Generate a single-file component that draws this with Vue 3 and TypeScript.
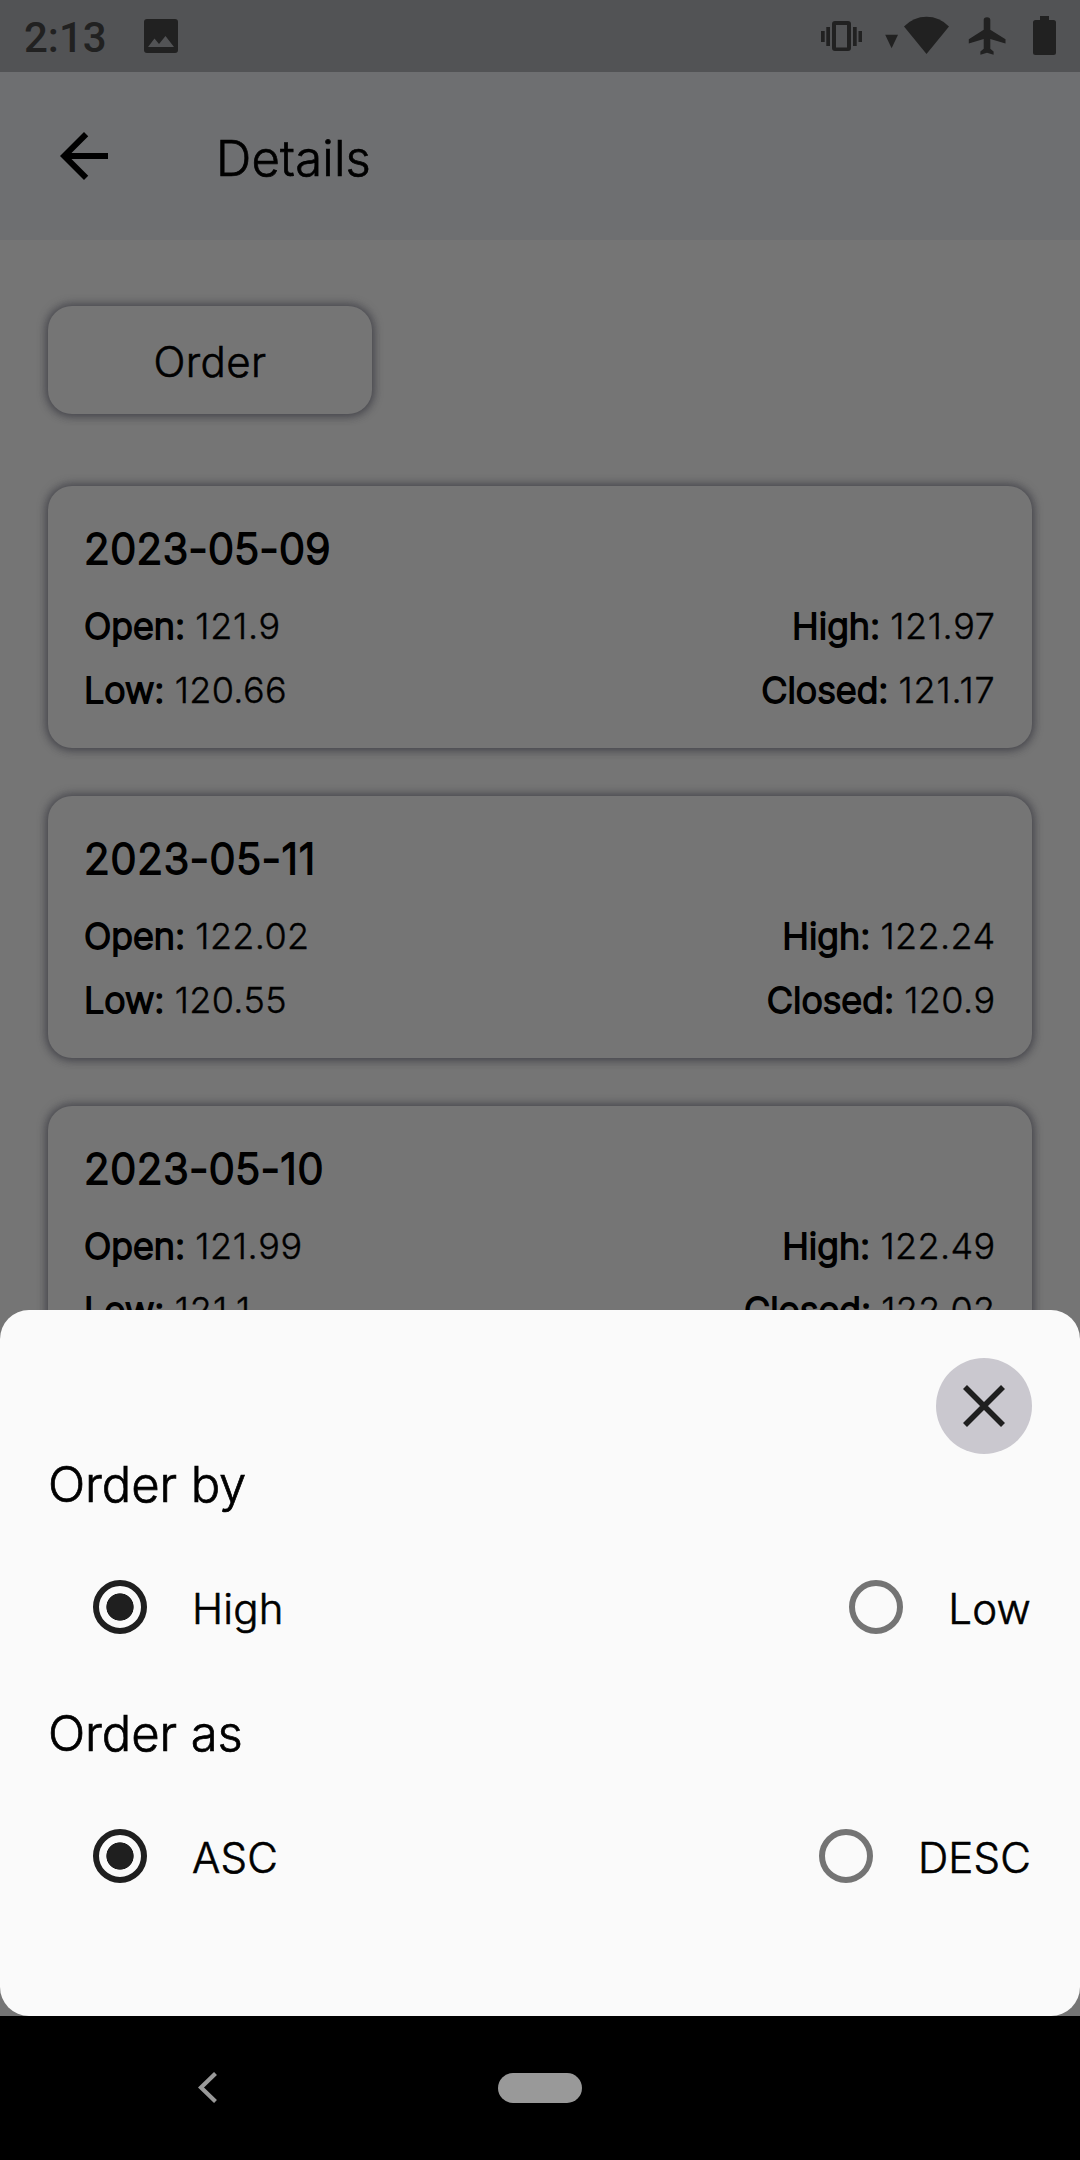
<script setup lang="ts">
interface Quote {
  date: string
  open: string
  low: string
  high: string
  closed: string
}

interface OrderGroup {
  title: string
  options: { label: string; selected: boolean }[]
}

const quotes: Quote[] = [
  { date: '2023-05-09', open: '121.9', low: '120.66', high: '121.97', closed: '121.17' },
  { date: '2023-05-11', open: '122.02', low: '120.55', high: '122.24', closed: '120.9' },
  { date: '2023-05-10', open: '121.99', low: '121.1', high: '122.49', closed: '122.02' },
]

const groups: OrderGroup[] = [
  { title: 'Order by', options: [{ label: 'High', selected: true }, { label: 'Low', selected: false }] },
  { title: 'Order as', options: [{ label: 'ASC', selected: true }, { label: 'DESC', selected: false }] },
]

// The digit 1 is narrow, so numbers that contain it are tracked a little wider.
function tracking(text: string, base: number, perOne: number) {
  const ones = text.split('1').length - 1
  return { letterSpacing: `${(base + (perOne * ones) / text.length).toFixed(2)}px` }
}
</script>

<template>
  <div class="screen">
    <header class="status">
      <span class="clock">2:13</span>
      <svg class="photo" width="36" height="36" viewBox="0 0 36 36">
        <path fill-rule="evenodd" d="M4 1h28q3 0 3 3v28q0 3-3 3H4q-3 0-3-3V4q0-3 3-3ZM5 29h26l-8.500-11-6.500 8-4.500-5.500Z" />
      </svg>
      <svg class="tray" width="250" height="72" viewBox="830 0 250 72">
        <path d="M821 31h3.700v11H821zM826.300 27h3.700v19h-3.700zM853 27h3.700v19H853zM858.500 31h3.500v11h-3.500z" />
        <path fill-rule="evenodd" d="M835 21h13q3 0 3 3v24q0 3-3 3h-13q-3 0-3-3V24q0-3 3-3ZM836 25v22.500h11V25Z" />
        <path d="M885.200 34.800h12.800l-6.400 13.500z" />
        <path d="M904 26.500q9.500-9.700 22.500-9.700t22.500 9.700L926.500 54z" />
        <path d="M1005.500 42.800v-3.600l-15.200-9.500V20q0-2.800-3.300-2.800T983.700 20v9.700l-14.900 9.500v4.300l14.900-4.600v9.900l-3.300 2.700v3.300l6.600-2 6.600 2v-3.300l-3.300-2.700v-9.900l15.200 4.600z" />
        <path d="M1040 16h9v4h4.500q2.500 0 2.500 2.500v30q0 2.500-2.500 2.500h-18q-2.500 0-2.500-2.500v-30q0-2.500 2.500-2.500h4.500z" />
      </svg>
    </header>

    <nav class="topbar">
      <svg class="back" width="72" height="72" viewBox="0 0 24 24">
        <path d="M20 11H7.830l5.590-5.590L12 4l-8 8 8 8 1.410-1.410L7.830 13H20v-2z" />
      </svg>
      <h1>Details</h1>
    </nav>

    <main class="content">
      <button class="order">Order</button>
      <article v-for="q in quotes" :key="q.date" class="card">
        <h2 :style="tracking(q.date, 0.4, 1.6)">{{ q.date }}</h2>
        <div class="row">
          <span><b>Open:</b> <span :style="tracking(q.open, 0.15, 1.4)">{{ q.open }}</span></span>
          <span><b>High:</b> <span :style="tracking(q.high, 0.15, 1.4)">{{ q.high }}</span></span>
        </div>
        <div class="row">
          <span><b>Low:</b> <span :style="tracking(q.low, 0.15, 1.4)">{{ q.low }}</span></span>
          <span><b>Closed:</b> <span :style="tracking(q.closed, 0.15, 1.4)">{{ q.closed }}</span></span>
        </div>
      </article>
    </main>

    <section class="sheet">
      <button class="close" aria-label="Close">
        <svg width="42" height="42" viewBox="0 0 42 42">
          <path d="M2 2 40 40M40 2 2 40" />
        </svg>
      </button>
      <div v-for="g in groups" :key="g.title" class="group">
        <h3>{{ g.title }}</h3>
        <div class="options">
          <label v-for="o in g.options" :key="o.label" class="option">
            <span class="radio" :class="{ selected: o.selected }"></span>
            <span class="label">{{ o.label }}</span>
          </label>
        </div>
      </div>
    </section>

    <footer class="navbar">
      <svg class="chevron" width="20" height="32" viewBox="0 0 20 32">
        <path d="M17.500 1.500 3 15.500 17.500 29.500" />
      </svg>
      <span class="pill"></span>
    </footer>
  </div>
</template>

<style>
body {
  margin: 0;
}
</style>

<style scoped>
.screen {
  position: relative;
  display: flex;
  flex-direction: column;
  width: 1080px;
  height: 2160px;
  overflow: hidden;
  background: #757575;
  color: #000;
  font-family: Inter, 'Liberation Sans', sans-serif;
  font-weight: 300;
}

h1,
h2,
h3 {
  margin: 0;
  font-weight: inherit;
}

button {
  padding: 0;
  border: 0;
  color: inherit;
  font: inherit;
}

.status {
  display: flex;
  align-items: center;
  flex: none;
  height: 72px;
  background: #525355;
  color: #212121;
  fill: #212121;
}

.clock {
  width: 143px;
  box-sizing: border-box;
  padding: 3px 0 0 24px;
  font: 500 42px/72px Roboto, sans-serif;
}

.tray {
  margin-left: auto;
  overflow: visible;
}

.topbar {
  display: flex;
  align-items: center;
  flex: none;
  height: 168px;
  background: #6e6f71;
}

.back {
  margin: 0 0 0 48px;
}

h1 {
  margin: 5px 0 0 96px;
  font-size: 49px;
  line-height: 60px;
  letter-spacing: 0.2px;
  -webkit-text-stroke: 0.7px #000;
}

.content {
  display: flex;
  flex-direction: column;
  align-items: flex-start;
  flex: none;
  height: 1776px;
  box-sizing: border-box;
  padding: 66px 48px 0;
  overflow: hidden;
}

.order,
.card {
  flex: none;
  border-radius: 24px;
  background: #757575;
  box-shadow: 0 0 8px 2px rgba(56, 56, 64, 0.7), 0 2px 9px rgba(56, 56, 64, 0.3);
}

.order {
  width: 324px;
  height: 108px;
  margin-bottom: 72px;
  padding-top: 3px;
  font-size: 42px;
  letter-spacing: 0.4px;
  -webkit-text-stroke: 0.6px #000;
}

.card {
  width: 984px;
  height: 262px;
  box-sizing: border-box;
  margin-bottom: 48px;
  padding: 33px 36px 0;
}

h2 {
  margin-bottom: 15px;
  font-size: 42px;
  line-height: 60px;
  -webkit-text-stroke: 1.9px #000;
}

.row {
  display: flex;
  justify-content: space-between;
  padding-right: 0.5px;
  font-size: 36px;
  line-height: 64px;
  -webkit-text-stroke: 0.4px #000;
}

b {
  font-weight: inherit;
  -webkit-text-stroke: 1.8px #000;
}

.sheet {
  position: absolute;
  top: 1310px;
  left: 0;
  display: flex;
  flex-direction: column;
  width: 1080px;
  height: 706px;
  box-sizing: border-box;
  padding: 48px 48px 0;
  border-radius: 29px;
  background: #fafafa;
}

.close {
  display: flex;
  align-items: center;
  justify-content: center;
  align-self: flex-end;
  flex: none;
  width: 96px;
  height: 96px;
  border-radius: 50%;
  background: #cac8cf;
}

.close path {
  fill: none;
  stroke: #1f1f1f;
  stroke-width: 5.6;
}

.group {
  height: 249px;
}

h3 {
  height: 80px;
  padding-top: 1px;
  font-size: 49px;
  line-height: 60px;
  letter-spacing: -0.1px;
  -webkit-text-stroke: 0.7px #000;
}

.options {
  display: flex;
  justify-content: space-between;
  height: 144px;
}

.option {
  display: flex;
  align-items: center;
}

.label {
  margin: 4px 1px 0 0;
  font-size: 42px;
  line-height: 50px;
  letter-spacing: 0.2px;
  -webkit-text-stroke: 0.6px #000;
}

.radio {
  display: block;
  width: 54px;
  height: 54px;
  box-sizing: border-box;
  margin: 0 45px;
  border: 6px solid #747474;
  border-radius: 50%;
}

.radio.selected {
  border-color: #1f1f1f;
  background: radial-gradient(circle, #1f1f1f 13.3px, transparent 14px);
}

.navbar {
  display: flex;
  align-items: center;
  flex: none;
  height: 144px;
  background: #000;
}

.chevron {
  margin-left: 198px;
}

.chevron path {
  fill: none;
  stroke: #999;
  stroke-width: 4.2;
}

.pill {
  width: 84px;
  height: 30px;
  margin-left: 280px;
  border-radius: 15px;
  background: #999;
}
</style>
